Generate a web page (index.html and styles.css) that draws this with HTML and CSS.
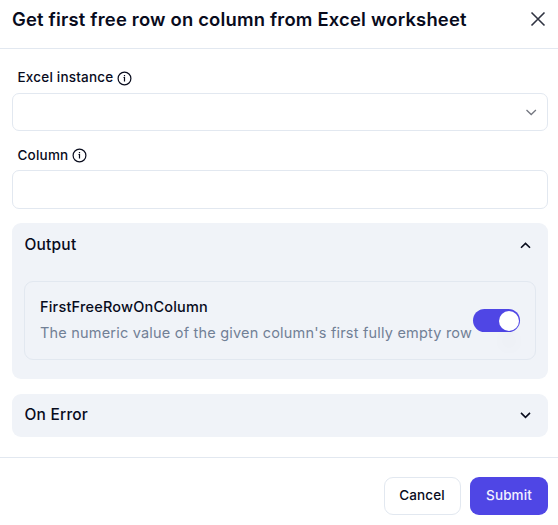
FILE: index.html
```html
<!DOCTYPE html>
<html lang="en">
<head>
<meta charset="utf-8">
<title>Get first free row on column</title>
<link rel="stylesheet" href="styles.css">
</head>
<body>
<main class="dialog">
  <header class="header">
    <h1>Get first free row on column from Excel worksheet</h1>
    <svg class="close" viewBox="0 0 16 16"><path d="M1.500 1.500l13 13M14.500 1.500l-13 13"/></svg>
  </header>
  <section class="content">
    <div class="label first"><span>Excel instance</span><svg class="info" viewBox="0 0 15 15"><circle cx="7.500" cy="7.500" r="6.400"/><path d="M6.500 6.500h1v4M7.500 4v1.200"/></svg></div>
    <div class="input"><svg class="chevron soft" viewBox="0 0 12 12"><path d="M1.500 4L6.200 8.500l4.700-4.500"/></svg></div>
    <div class="label second"><span>Column</span><svg class="info" viewBox="0 0 15 15"><circle cx="7.500" cy="7.500" r="6.400"/><path d="M6.500 6.500h1v4M7.500 4v1.200"/></svg></div>
    <div class="input column"></div>
    <section class="panel output">
      <div class="panel-head"><span>Output</span><svg class="chevron" viewBox="0 0 12 12"><path d="M2 8.800L6.500 4.400l4.500 4.400"/></svg></div>
      <div class="card">
        <div class="desc"><strong>FirstFreeRowOnColumn</strong><span>The numeric value of the given column's first fully empty row</span></div>
        <div class="toggle"></div>
      </div>
    </section>
    <section class="panel error">
      <div class="panel-head"><span>On Error</span><svg class="chevron" viewBox="0 0 12 12"><path d="M2 3.900L6.500 8.300l4.500-4.400"/></svg></div>
    </section>
  </section>
  <footer class="footer"><button class="cancel">Cancel</button><button class="submit">Submit</button></footer>
</main>
</body>
</html>
```
FILE: styles.css
```css
* { box-sizing: border-box; }
body { margin: 0; background: #fff; color: #080b1c; font-family: Inter, sans-serif; }
.dialog { width: 558px; height: 525px; display: flex; flex-direction: column; overflow: hidden; }
.header { height: 49px; padding: 8px 12px 0; border-bottom: 1px solid #e2e8f0; display: flex; justify-content: space-between; align-items: flex-start; }
h1 { margin: 0; font-size: 18.4px; line-height: 22px; font-weight: 600; letter-spacing: 0.2px; white-space: nowrap; }
svg { fill: none; stroke: currentColor; flex: none; display: block; }
.close { width: 16px; height: 16px; margin-top: 3px; stroke-width: 1.6; color: #303442; }
.content { height: 408px; padding: 0 10px 0 12px; }
.label { display: flex; align-items: center; gap: 4px; height: 20px; padding-left: 5.5px; font-size: 13.5px; font-weight: 450; letter-spacing: 0.2px; }
.label span { line-height: 18px; }
.first { margin-top: 19px; }
.first span { margin-top: -2px; }
.second { margin-top: 14px; }
.info { width: 15px; height: 15px; stroke-width: 1.200; }
.input { height: 38px; margin-top: 5px; border: 1px solid #e2e8f0; border-radius: 7px; display: flex; justify-content: flex-end; align-items: center; padding-right: 10px; }
.column { height: 39px; }
.chevron { width: 12px; height: 12px; stroke-width: 1.600; }
.soft { color: #747780; stroke-width: 1.300; }
.panel { background: #f0f3f8; border-radius: 9px; padding: 0 12px; }
.output { height: 156px; margin-top: 14px; }
.error { height: 43px; margin-top: 15px; }
.panel-head { height: 43px; padding: 0 5px 0 0.5px; display: flex; align-items: center; justify-content: space-between; font-size: 15.5px; font-weight: 450; letter-spacing: 0.2px; }
.error .panel-head { height: 42px; }
.error .panel-head span { margin-top: -1px; }
.card { height: 79px; margin-top: 15px; border: 1px solid #e2e8f0; border-radius: 9px; padding: 0 15px; display: flex; align-items: center; justify-content: space-between; }
.desc { display: flex; flex-direction: column; gap: 4px; padding-bottom: 2px; white-space: nowrap; width: 432px; }
.desc strong { font-size: 14.5px; line-height: 22px; font-weight: 450; letter-spacing: 0.2px; }
.desc span { font-size: 14.5px; line-height: 22px; color: #718096; letter-spacing: 0.2px; }
.toggle { width: 47px; height: 23px; flex: none; border-radius: 12px; background: #4f46e5; display: flex; justify-content: flex-end; align-items: center; padding-right: 1px; }
.toggle::after { content: ""; width: 20px; height: 20px; border-radius: 50%; background: #fff; box-shadow: 0 20px 16px -3px rgb(0 0 0 / 3%), 0 8px 6px -6px rgb(0 0 0 / 3%); }
.footer { flex: 1; border-top: 1px solid #e2e8f0; display: flex; justify-content: flex-end; align-items: flex-start; gap: 9px; padding: 19px 10px 0; }
button { height: 38px; border-radius: 9px; padding: 0 0 2px; font: 500 13.5px Inter, sans-serif; letter-spacing: 0.1px; }
.cancel { width: 77px; padding-right: 1px; background: #fff; border: 1px solid #e2e8f0; color: #080b1c; }
.submit { width: 78px; background: #4f46e5; border: 0; color: #f3f2ff; }
```
